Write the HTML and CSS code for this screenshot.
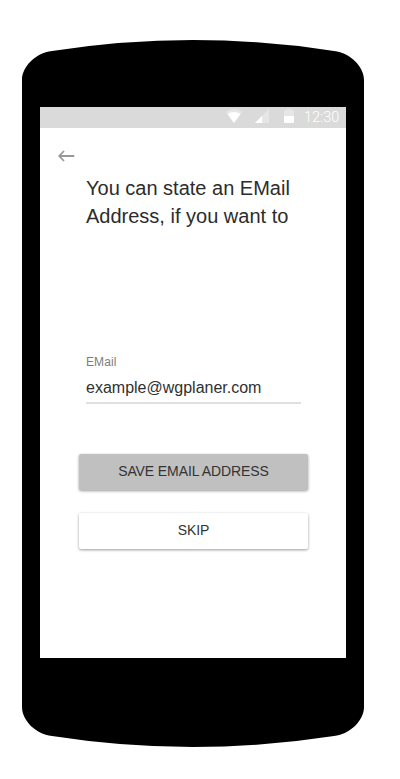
FILE: index.html
```html
<!DOCTYPE html>
<html lang="en">
<head>
<meta charset="utf-8">
<title>WG Planer</title>
<link rel="stylesheet" href="styles.css">
</head>
<body>
<div class="phone">
  <svg class="shell" viewBox="0 0 342 708" aria-hidden="true"><path d="M0 40C0 27 13 13 30 11Q171-11 312 11C329 13 342 27 342 40V667C342 680 329 694 312 696Q171 718 30 696C13 694 0 680 0 667Z"/></svg>
  <main class="screen">
    <header class="status">
      <svg class="wifi" viewBox="0 0 16 14"><path d="M0 3Q8-3 16 3L8 14Z" fill="#e6e6e6"/><path d="M1.5 5Q8 1 14.5 5L8 14Z" fill="#fff"/></svg>
      <svg class="signal" viewBox="0 0 14 14"><path d="M0 14L14 0V14Z" fill="#e6e6e6"/><path d="M0 14L7 7V14Z" fill="#fff"/></svg>
      <svg class="battery" viewBox="0 0 10 14"><path d="M0 2Q0 1 1 1H2.5V0H7.5V1H9Q10 1 10 2V7H0Z" fill="#e6e6e6"/><path d="M0 7H10V13Q10 14 9 14H1Q0 14 0 13Z" fill="#fff"/></svg>
      <time>12:30</time>
    </header>
    <svg class="back" viewBox="0 0 17 12"><path d="M16.3 6H1.5M6 1L1.2 6L6 11" fill="none" stroke="#999" stroke-width="1.8"/></svg>
    <h1>You can state an EMail<br>Address, if you want to</h1>
    <div class="field">
      <div class="label">EMail</div>
      <div class="value">example@wgplaner.com</div>
    </div>
    <div class="actions">
      <button class="primary">SAVE EMAIL ADDRESS</button>
      <button>SKIP</button>
    </div>
  </main>
</div>
</body>
</html>
```

FILE: styles.css
```css
* { box-sizing: border-box; }
body { margin: 0; background: #fff; font-family: "Liberation Sans", Arial, sans-serif; }
.phone { position: relative; width: 342px; height: 708px; margin: 40px 0 0 22px; padding: 67px 18px 89px; }
.shell { position: absolute; inset: 0; width: 342px; height: 708px; }
.screen { position: relative; display: flex; flex-direction: column; height: 551px; width: 306px; background: #fff; }
svg { display: block; }
.status { display: flex; height: 21px; flex: none; justify-content: flex-end; padding: 2px 6px 0 0; background: #dadada; color: #fff; }
.wifi { width: 16px; height: 14px; margin: 0 13px 0 0; }
.signal { width: 14px; height: 14px; margin: 0 15px 0 0; }
.battery { width: 10px; height: 14px; margin: 0 10px 0 0; }
.status time { width: 36px; font: 300 14.5px/18px Roboto, sans-serif; white-space: nowrap; }
.back { width: 17px; height: 12px; margin: 22px 0 0 18px; flex: none; }
h1 { margin: 12px 0 0 46px; font-size: 20px; font-weight: 400; line-height: 28px; color: #2c2c2c; white-space: nowrap; }
.field { width: 215px; height: 50px; margin: 124px 0 0 46px; border-bottom: 2px solid #e0e0e0; }
.label { font-size: 12px; line-height: 16px; letter-spacing: .12px; color: #7d7d7d; }
.value { margin-top: 8px; font-size: 16px; line-height: 20px; color: #303030; }
.actions { display: grid; gap: 23px; width: 229px; margin: 50px 0 0 39px; }
button { height: 36px; padding: 0 0 2px; border: 0; border-radius: 2px; background: #fff; box-shadow: 0 1px 3px rgba(0,0,0,.4); font: 14px/20px "Liberation Sans", Arial, sans-serif; letter-spacing: -.1px; color: #333; }
.primary { background: #c0c0c0; }
```
